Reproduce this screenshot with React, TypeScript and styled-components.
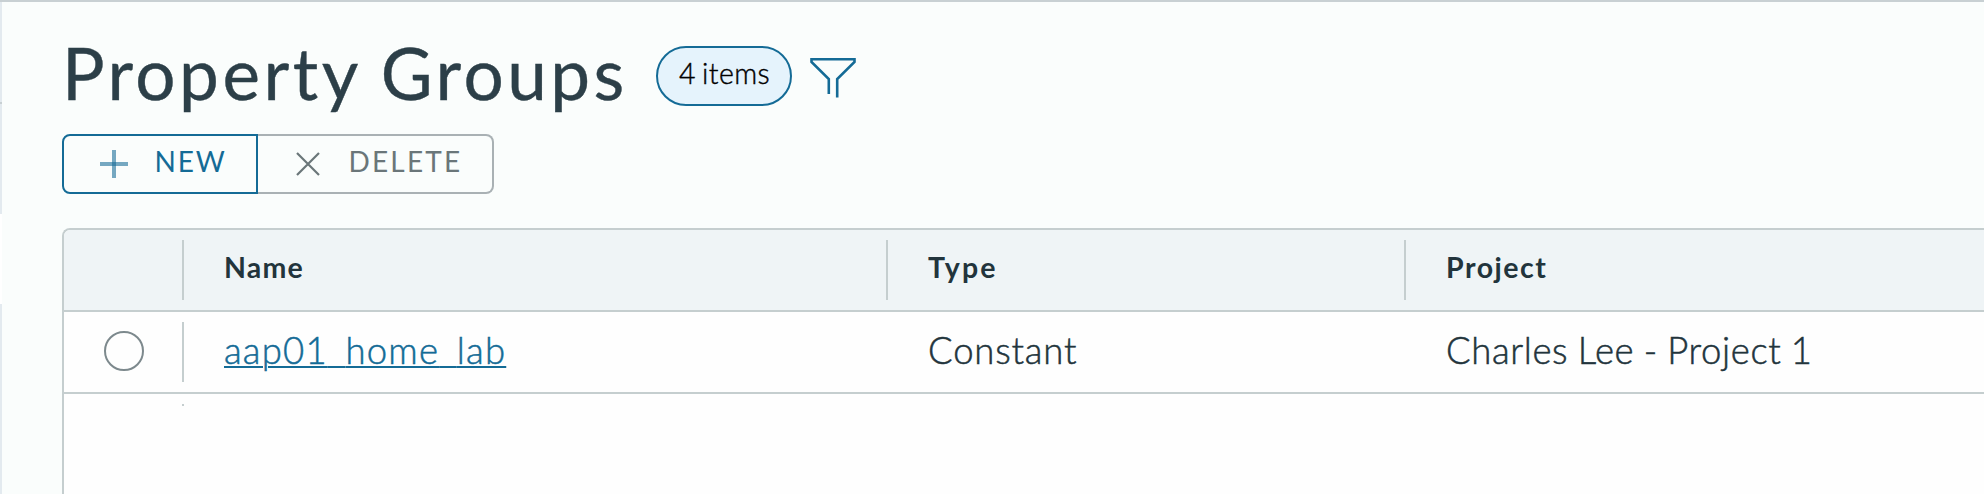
import React from "react";
import styled, { createGlobalStyle, css } from "styled-components";

const line = "#c5cecf";
const blue = "#146b96";
const ink = "#22343c";

const GlobalStyle = createGlobalStyle`
  * { box-sizing: border-box; }
  html, body { margin: 0; height: 100%; overflow: hidden; }
  body { background: #fafdfc; color: ${ink}; font-family: Lato, "Open Sans", sans-serif; }
  #root { height: 100%; }
`;

const Page = styled.div`
  display: flex;
  height: 494px;
  border-top: 2px solid #c8d0d3;
  overflow: hidden;
`;

const Rail = styled.div`
  display: flex;
  flex-direction: column;
  flex: 0 0 2px;
`;

const RailPart = styled.div<{ $height?: number; $tone: string }>`
  ${(p) => (p.$height ? css`flex: 0 0 ${p.$height}px;` : css`flex: 1;`)}
  background: ${(p) => p.$tone};
`;

const Content = styled.main`
  flex: 1;
  min-width: 0;
  display: flex;
  flex-direction: column;
  padding: 32px 0 0 60px;
`;

const Header = styled.header`
  display: flex;
  align-items: flex-start;
  height: 100px;
`;

const Title = styled.h1`
  margin: -3px 0 0;
  width: 594px;
  font-size: 71px;
  line-height: 84px;
  font-weight: 400;
  letter-spacing: 3.5px;
  word-spacing: -1px;
  color: #2c3f48;
  -webkit-text-stroke: 0.4px #2c3f48;
  white-space: nowrap;
`;

const Badge = styled.span`
  margin-top: 12px;
  width: 136px;
  height: 60px;
  padding-left: 21px;
  border: 2px solid ${blue};
  border-radius: 30px;
  background: #e5f3fc;
  color: #000;
  font-size: 28.5px;
  font-weight: 300;
  -webkit-text-stroke: 0.4px #000;
  line-height: 51px;
  letter-spacing: 0.4px;
  word-spacing: -2px;
  white-space: nowrap;
`;

const FilterIcon = styled.svg`
  margin: 22px 0 0 16px;
  width: 50px;
  height: 44px;
  fill: none;
  stroke: ${blue};
`;

const ButtonGroup = styled.div`
  display: flex;
  height: 60px;
`;

const Button = styled.button<{ $primary?: boolean }>`
  display: flex;
  align-items: center;
  width: ${(p) => (p.$primary ? 196 : 236)}px;
  height: 60px;
  padding: 0 0 0 36px;
  border: 2px solid ${(p) => (p.$primary ? blue : "#a9b1b4")};
  ${(p) => (p.$primary ? "" : "border-left: 0;")}
  border-radius: ${(p) => (p.$primary ? "8px 0 0 8px" : "0 8px 8px 0")};
  background: transparent;
  color: ${(p) => (p.$primary ? blue : "#6a7679")};
  font-family: inherit;
  font-size: 28px;
  line-height: 34px;
  letter-spacing: ${(p) => (p.$primary ? 1.9 : 2.2)}px;
`;

const ButtonIcon = styled.svg`
  flex: none;
  width: 28px;
  height: 28px;
  margin-right: 26.5px;
  fill: none;
`;

const ButtonLabel = styled.span`
  padding-bottom: 6px;
`;

const Grid = styled.section`
  flex: 1;
  margin-top: 34px;
  border: 2px solid ${line};
  border-width: 2px 0 0 2px;
  border-radius: 8px 0 0 0;
  background: #fefefe;
  overflow: hidden;
`;

const Row = styled.div<{ $head?: boolean }>`
  display: grid;
  grid-template-columns: 120px 704px 518px 1fr;
  height: 82px;
  border-bottom: 2px solid ${line};
  background: ${(p) => (p.$head ? "#eff4f6" : "transparent")};
`;

const Cell = styled.div<{ $divider?: boolean }>`
  display: flex;
  align-items: center;
  height: 60px;
  margin-top: 10px;
  padding-left: 40px;
  border-right: 2px solid ${(p) => (p.$divider ? line : "transparent")};
  white-space: nowrap;
`;

const HeadText = styled.span<{ $spacing?: number }>`
  font-size: 28.5px;
  line-height: 34px;
  font-weight: 700;
  letter-spacing: ${(p) => p.$spacing ?? 0}px;
  padding-bottom: 6px;
`;

const BodyText = styled.span<{ $spacing?: number }>`
  font-size: 36.5px;
  line-height: 44px;
  font-weight: 300;
  -webkit-text-stroke: 0.5px currentColor;
  letter-spacing: ${(p) => p.$spacing ?? 0}px;
  word-spacing: -1px;
  padding-bottom: 4px;
`;

const Link = styled(BodyText).attrs({ as: "a" })`
  color: ${blue};
  text-decoration: underline 2px ${blue};
  text-underline-offset: 2px;
`;

const Underscore = styled.span`
  color: transparent;
  -webkit-text-stroke: 0;
  text-decoration-skip-ink: none;
`;

const Radio = styled.span`
  width: 40px;
  height: 40px;
  margin-bottom: 3px;
  border: 2px solid #7d898d;
  border-radius: 50%;
`;

const NextRow = styled.div`
  width: 120px;
  height: 2px;
  margin-top: 10px;
  border-right: 2px solid ${line};
`;

export default function App() {
  return (
    <>
      <GlobalStyle />
      <Page>
        <Rail>
          <RailPart $height={100} $tone="#e3eaef" />
          <RailPart $height={2} $tone="#c8d0d3" />
          <RailPart $height={110} $tone="#e3eaef" />
          <RailPart $height={90} $tone="#ffffff" />
          <RailPart $tone="#e3eaef" />
        </Rail>
        <Content>
          <Header>
            <Title>Property Groups</Title>
            <Badge>4 items</Badge>
            <FilterIcon viewBox="0 0 50 44">
              <path
                strokeWidth="2.6"
                d="M20.800 38V23L3.500 6V3.300H46.500V6L29.200 23V41.500"
              />
            </FilterIcon>
          </Header>
          <ButtonGroup>
            <Button $primary>
              <ButtonIcon viewBox="0 0 28 28" stroke="rgba(20,107,150,0.58)" strokeWidth="4">
                <path d="M14 0V28" />
                <path d="M0 14H28" />
              </ButtonIcon>
              <ButtonLabel>NEW</ButtonLabel>
            </Button>
            <Button>
              <ButtonIcon viewBox="0 0 28 28" stroke="#6a7679" strokeWidth="2.200">
                <path d="M3 3L25 25M25 3L3 25" />
              </ButtonIcon>
              <ButtonLabel>DELETE</ButtonLabel>
            </Button>
          </ButtonGroup>
          <Grid>
            <Row $head>
              <Cell $divider />
              <Cell $divider><HeadText $spacing={1.2}>Name</HeadText></Cell>
              <Cell $divider><HeadText $spacing={2.1}>Type</HeadText></Cell>
              <Cell><HeadText $spacing={1.5}>Project</HeadText></Cell>
            </Row>
            <Row>
              <Cell $divider><Radio /></Cell>
              <Cell>
                <Link $spacing={1.2}>
                  aap01<Underscore>_</Underscore>home<Underscore>_</Underscore>lab
                </Link>
              </Cell>
              <Cell><BodyText $spacing={0.8}>Constant</BodyText></Cell>
              <Cell><BodyText $spacing={0.6}>Charles Lee - Project 1</BodyText></Cell>
            </Row>
            <NextRow />
          </Grid>
        </Content>
      </Page>
    </>
  );
}
